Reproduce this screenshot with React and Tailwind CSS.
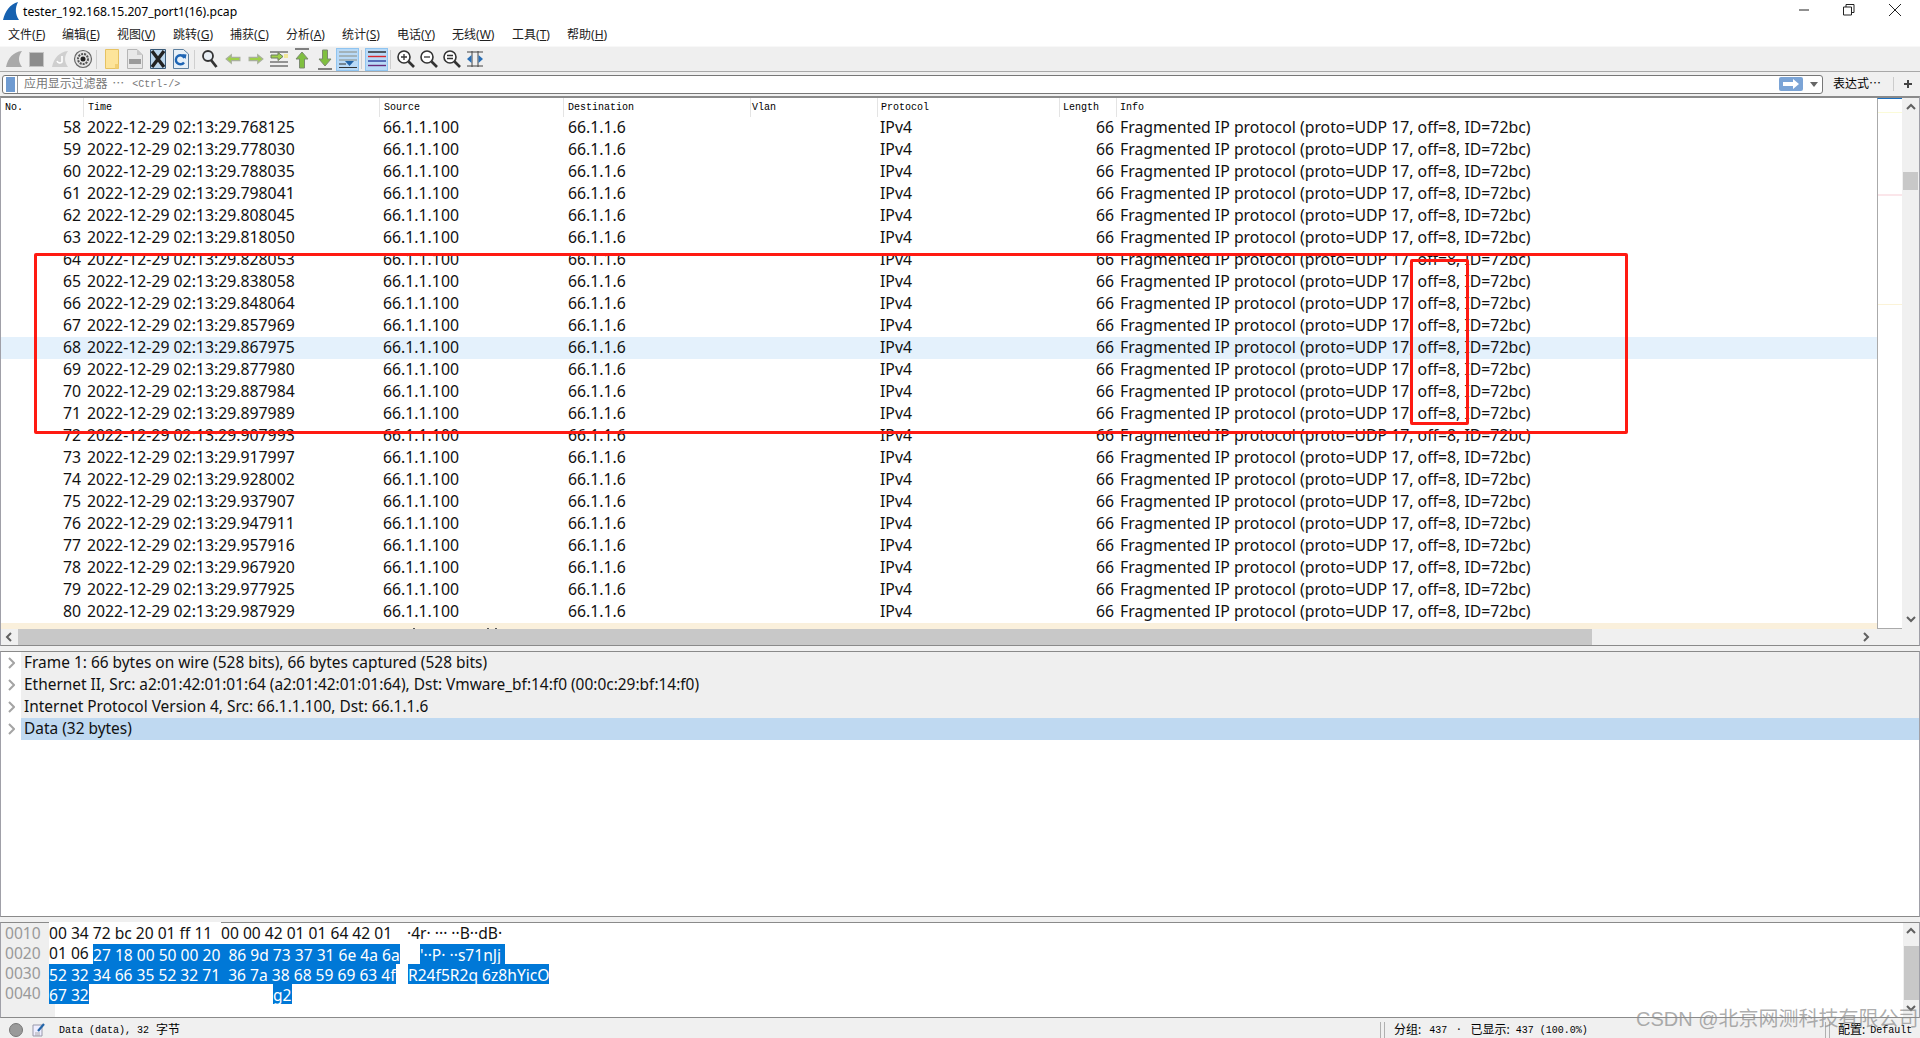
const startNo = 58;
const times = [
  "768125", "778030", "788035", "798041", "808045", "818050", "828053", "838058",
  "848064", "857969", "867975", "877980", "887984", "897989", "907993", "917997",
  "928002", "937907", "947911", "957916", "967920", "977925", "987929",
];
const menus = [
  ["文件", "F", "w-[54px]"],
  ["编辑", "E", "w-[55px]"],
  ["视图", "V", "w-[56px]"],
  ["跳转", "G", "w-[57px]"],
  ["捕获", "C", "w-[56px]"],
  ["分析", "A", "w-[56px]"],
  ["统计", "S", "w-[55px]"],
  ["电话", "Y", "w-[55px]"],
  ["无线", "W", "w-[60px]"],
  ["工具", "T", "w-[55px]"],
  ["帮助", "H", "w-[60px]"],
];
const tree = [
  "Frame 1: 66 bytes on wire (528 bits), 66 bytes captured (528 bits)",
  "Ethernet II, Src: a2:01:42:01:01:64 (a2:01:42:01:01:64), Dst: Vmware_bf:14:f0 (00:0c:29:bf:14:f0)",
  "Internet Protocol Version 4, Src: 66.1.1.100, Dst: 66.1.1.6",
];
const mono = "font-['Liberation_Mono',monospace] text-[10px]";
const colHead = `${mono} text-black`;
const rowText = "font-['Noto_Sans',sans-serif] text-[15.8px] text-[#111]";
const treeText = "font-['Noto_Sans',sans-serif] text-[15.45px] text-[#111]";
const hexText = "font-['Noto_Sans',sans-serif] text-[15.6px] text-[#111]";

function Chevron({ dir = "up", className = "" }) {
  const d = { up: "M1 6 L5 2 L9 6", down: "M1 2 L5 6 L9 2", left: "M6 1 L2 5 L6 9", right: "M2 1 L6 5 L2 9" }[dir];
  return (
    <svg width="10" height="10" viewBox="0 0 10 10" className={className}>
      <path d={d} fill="none" stroke="#606060" strokeWidth="2" />
    </svg>
  );
}

function TreeGutter() {
  return (
    <div className="w-[20px] h-full shrink-0 flex items-center pl-[7px] bg-white">
      <svg width="7" height="12" viewBox="0 0 7 12">
        <path d="M1 1 L6 6 L1 11" fill="none" stroke="#a4a4a4" strokeWidth="2" />
      </svg>
    </div>
  );
}

function Mag({ children }) {
  return (
    <svg width="20" height="20" viewBox="0 0 20 20">
      <circle cx="8" cy="8" r="6" fill="#fff" stroke="#333" strokeWidth="1.6" />
      <path d="M12.5 12.5 L18 18" stroke="#333" strokeWidth="2.6" />
      {children}
    </svg>
  );
}

function Arrow({ flip }) {
  return (
    <svg width="18" height="12" viewBox="0 0 20 14">
      <path
        d={flip ? "M2 7 L8 2 V5 H18 V9 H8 V12 Z" : "M18 7 L12 2 V5 H2 V9 H12 V12 Z"}
        fill="#9fd04a"
        stroke="#a8b09c"
        strokeWidth="1.4"
      />
    </svg>
  );
}

function ToolIcon({ name }) {
  switch (name) {
    case "shark":
      return (
        <svg width="20" height="20" viewBox="0 0 20 20">
          <path d="M2 18 C4 9 9 3 18 2 C14 7 14 13 18 18 Z" fill="#a9a9a9" />
        </svg>
      );
    case "stop":
      return <div className="w-[15px] h-[15px] bg-[#8c8c8c] border border-[#c4c4c4]" />;
    case "restart":
      return (
        <svg width="20" height="20" viewBox="0 0 20 20">
          <path d="M2 18 C4 9 9 3 18 2 C14 7 14 13 18 18 Z" fill="#cfcfcf" />
          <path d="M12 7 V13 A3 3 0 0 1 7 12" fill="none" stroke="#fff" strokeWidth="1.6" />
        </svg>
      );
    case "gear":
      return (
        <svg width="20" height="20" viewBox="0 0 20 20">
          <circle cx="10" cy="10" r="8.5" fill="#e4e4e4" stroke="#666" strokeWidth="1.2" />
          <circle cx="10" cy="10" r="5" fill="none" stroke="#555" strokeWidth="2" strokeDasharray="2 1" />
          <circle cx="10" cy="10" r="2.5" fill="#222" />
        </svg>
      );
    case "file":
      return (
        <svg width="14" height="20" viewBox="0 0 14 20">
          <path d="M.5 .5 H13.5 V19.5 H.5 Z" fill="#fde49a" stroke="#e6c262" />
          <path d="M10 15 H13.5 V19.5 H10 Z" fill="#f2cf73" />
        </svg>
      );
    case "binary":
      return (
        <svg width="16" height="20" viewBox="0 0 16 20">
          <path d="M.5 .5 H10 L15.5 6 V19.5 H.5 Z" fill="#e8e8e8" stroke="#b5b5b5" />
          <path d="M10 .5 V6 H15.5 Z" fill="#c9c9c9" />
          <rect x="2" y="10" width="12" height="5" fill="#9b9b9b" />
        </svg>
      );
    case "close":
      return (
        <svg width="16" height="20" viewBox="0 0 16 20">
          <path d="M.5 .5 H15.5 V19.5 H.5 Z" fill="#bcd6ec" stroke="#3a5a78" />
          <path d="M2 2 L14 18 M14 2 L2 18" stroke="#222" strokeWidth="3.4" />
        </svg>
      );
    case "reload":
      return (
        <svg width="16" height="20" viewBox="0 0 16 20">
          <path d="M.5 .5 H10.5 L15.5 5 V19.5 H.5 Z" fill="#e6f0f8" stroke="#5c7f9f" />
          <path d="M11.5 9 A4.5 4.5 0 1 0 11 13.5" fill="none" stroke="#1d65b5" strokeWidth="2.4" />
          <path d="M9 5 L13.5 5.5 L12.5 10 Z" fill="#1d65b5" />
        </svg>
      );
    case "find":
      return (
        <svg width="18" height="20" viewBox="0 0 18 20">
          <circle cx="7" cy="7" r="5" fill="#e8eef4" stroke="#333" strokeWidth="1.8" />
          <path d="M10 11 L15.5 18" stroke="#333" strokeWidth="2.8" />
        </svg>
      );
    case "left":
      return <Arrow flip />;
    case "right":
      return <Arrow />;
    case "jump":
      return (
        <svg width="20" height="20" viewBox="0 0 20 20">
          <path d="M1 3 H19 M1 17 H19" stroke="#333" strokeWidth="1.2" />
          <path d="M1 13 H19" stroke="#555" strokeWidth="1.2" />
          <path d="M14 7.5 L9 3.5 V6 H2 V9 H9 V11.5 Z" fill="#9fd04a" stroke="#6c7a5e" />
          <rect x="15" y="5" width="4" height="4" fill="#f1e79b" />
        </svg>
      );
    case "top":
      return (
        <svg width="16" height="22" viewBox="0 0 16 22">
          <path d="M1 1 H15" stroke="#333" strokeWidth="1.2" />
          <path d="M8 4 L14 11 H10.5 V20 H5.5 V11 H2 Z" fill="#7fbf3f" stroke="#7c8a70" />
        </svg>
      );
    case "bottom":
      return (
        <svg width="16" height="22" viewBox="0 0 16 22">
          <path d="M1 21 H15" stroke="#333" strokeWidth="1.2" />
          <path d="M8 18 L14 11 H10.5 V2 H5.5 V11 H2 Z" fill="#7fbf3f" stroke="#7c8a70" />
        </svg>
      );
    case "scroll":
      return (
        <svg width="18" height="18" viewBox="0 0 18 18">
          <path d="M0 2 H18 M0 6 H18 M0 10 H18" stroke="#8c8c80" strokeWidth="1.2" />
          <path d="M0 14 H7 M0 17.5 H18" stroke="#333" strokeWidth="1" />
          <path d="M6 11 H15 L10.5 16 Z" fill="#2465a8" />
        </svg>
      );
    case "color":
      return (
        <svg width="18" height="16" viewBox="0 0 18 16">
          <path d="M0 1 H18" stroke="#222" strokeWidth="1.4" />
          <path d="M0 5.5 H18" stroke="#d8262c" strokeWidth="1.4" />
          <path d="M0 10 H18" stroke="#2c3f9c" strokeWidth="1.4" />
          <path d="M0 14.5 H18" stroke="#6a2a7a" strokeWidth="1.4" />
        </svg>
      );
    case "zoomin":
      return (
        <Mag>
          <path d="M5 8 H11 M8 5 V11" stroke="#333" strokeWidth="1.3" />
        </Mag>
      );
    case "zoomout":
      return (
        <Mag>
          <path d="M5 8 H11" stroke="#333" strokeWidth="1.3" />
        </Mag>
      );
    case "zoomreset":
      return (
        <Mag>
          <path d="M5 6.5 H11 M5 9.5 H11" stroke="#333" strokeWidth="1.3" />
        </Mag>
      );
    case "resize":
      return (
        <svg width="16" height="16" viewBox="0 0 16 16">
          <path d="M0 1 H16 M0 15 H16 M5 0 V16 M11 0 V16" stroke="#444" strokeWidth="1" />
          <path d="M0 8 L4.5 4 V12 Z M16 8 L11.5 4 V12 Z" fill="#2a6fb5" />
        </svg>
      );
    default:
      return null;
  }
}

function Tool({ name, on }) {
  return (
    <div
      className={`w-[23px] h-[23px] flex items-center justify-center shrink-0 ${
        on ? "bg-[#b9daf7] border border-[#8fc4f0]" : ""
      }`}
    >
      <ToolIcon name={name} />
    </div>
  );
}

function Sep() {
  return <div className="w-px h-[19px] ml-[2px] mr-[3px] bg-[#cfcfcf] shrink-0" />;
}

function Row({ no, time, bg = "" }) {
  return (
    <div className={`flex h-[22px] shrink-0 items-center pb-[1px] whitespace-nowrap ${rowText} ${bg}`}>
      <div className="w-[80px] text-right shrink-0">{no}</div>
      <div className="w-[302px] pl-[6px] shrink-0">2022-12-29 02:13:29.{time}</div>
      <div className="w-[185px] shrink-0">66.1.1.100</div>
      <div className="w-[312px] shrink-0">66.1.1.6</div>
      <div className="w-[186px] shrink-0">IPv4</div>
      <div className="w-[48px] text-right shrink-0">66</div>
      <div className="pl-[6px]">Fragmented IP protocol (proto=UDP 17, off=8, ID=72bc)</div>
    </div>
  );
}

function HexRow({ offset, children }) {
  return (
    <div className={`flex h-[20px] shrink-0 items-center whitespace-pre ${hexText}`}>
      <div className="w-[48px] pl-[4px] shrink-0 text-[#999]">{offset}</div>
      {children}
    </div>
  );
}

function Sel({ className = "", children }) {
  return <div className={`bg-[#0078d7] text-white h-[20px] shrink-0 ${className}`}>{children}</div>;
}

export default function App() {
  return (
    <div className="relative w-full h-screen overflow-hidden flex flex-col bg-[#f0f0f0] font-['Noto_Sans','Noto_Sans_CJK_SC',sans-serif] text-black">
      {/* title bar */}
      <div className="h-[22px] shrink-0 flex items-center bg-white pl-[3px]">
        <svg width="16" height="18" viewBox="0 0 16 18">
          <path d="M0 18 C2 9 7 2 15 0 C12 6 12 12 16 18 Z" fill="#1661b0" />
        </svg>
        <span className="ml-[4px] mt-[2px] text-[12.2px]">tester_192.168.15.207_port1(16).pcap</span>
        <div className="ml-auto mb-[2px] flex items-center">
          <svg width="12" height="12" viewBox="0 0 12 12" className="mr-[33px]">
            <path d="M1 6 H11" stroke="#222" />
          </svg>
          <svg width="12" height="12" viewBox="0 0 12 12" className="mr-[33px]">
            <path d="M.5 3 H8.5 V11 H.5 Z M3 3 V.5 H11 V8.5 H8.5" fill="none" stroke="#222" />
          </svg>
          <svg width="14" height="14" viewBox="0 0 14 14" className="mr-[18px]">
            <path d="M1 1 L13 13 M13 1 L1 13" stroke="#222" />
          </svg>
        </div>
      </div>

      {/* menu bar */}
      <div className="h-[24px] shrink-0 flex items-center pt-[2px] bg-white pl-[8px] text-[12px] text-[#222]">
        {menus.map(([label, key, w]) => (
          <div key={key} className={`shrink-0 ${w}`}>
            {label}(<span className="underline">{key}</span>)
          </div>
        ))}
      </div>

      {/* toolbar */}
      <div className="h-[26px] shrink-0 flex items-center pl-[2px] bg-[#efefef] border-t border-[#f8f8f8] border-b border-b-[#a8a8a8]">
        <Tool name="shark" />
        <Tool name="stop" />
        <Tool name="restart" />
        <Tool name="gear" />
        <Sep />
        <Tool name="file" />
        <Tool name="binary" />
        <Tool name="close" />
        <Tool name="reload" />
        <Sep />
        <Tool name="find" />
        <Tool name="left" />
        <Tool name="right" />
        <Tool name="jump" />
        <Tool name="top" />
        <Tool name="bottom" />
        <Tool name="scroll" on />
        <Sep />
        <Tool name="color" on />
        <Sep />
        <Tool name="zoomin" />
        <Tool name="zoomout" />
        <Tool name="zoomreset" />
        <Tool name="resize" />
      </div>

      {/* display filter */}
      <div className="h-[24px] shrink-0 flex items-center pl-[2px] bg-[#f0f0f0]">
        <div className="w-[1821px] h-[19px] shrink-0 flex items-center bg-white border border-[#777] rounded-[3px]">
          <div className="w-[15px] h-full shrink-0 border-r border-[#999] flex justify-center items-center">
            <div className="w-[9px] h-[15px] bg-[#6f9bd1]" />
          </div>
          <span className="ml-[6px] text-[12px] tracking-[-0.1px] text-[#777]">应用显示过滤器</span>
          <span className="ml-[5px] text-[12px] text-[#777]">⋯</span>
          <span className={`ml-[8px] text-[#777] ${mono}`}>&lt;Ctrl-/&gt;</span>
          <div className="ml-auto w-[24px] h-[14px] bg-[#7ba4d6] rounded-[2px] flex items-center justify-center">
            <svg width="18" height="10" viewBox="0 0 18 10">
              <path d="M1 3 H11 V0 L17 5 L11 10 V7 H1 Z" fill="#fff" />
            </svg>
          </div>
          <svg width="8" height="5" viewBox="0 0 8 5" className="ml-[7px] mr-[4px]">
            <path d="M0 0 H8 L4 5 Z" fill="#666" />
          </svg>
        </div>
        <span className="ml-[10px] text-[12px] w-[60px]">表达式⋯</span>
        <div className="w-px h-[14px] bg-[#ccc]" />
        <svg width="10" height="10" viewBox="0 0 10 10" className="ml-[9px]">
          <path d="M5 1 V9 M1 5 H9" stroke="#444" strokeWidth="2" />
        </svg>
      </div>

      {/* packet list */}
      <div className="h-[550px] shrink-0 flex flex-col border-t-2 border-[#8a8a8a] border-l border-l-[#a0a0a8] border-r border-r-[#a0a0a8] border-b border-b-[#8a8a8a] overflow-hidden">
        <div className="flex-1 min-h-0 flex">
          <div className="flex-1 min-w-0 flex flex-col bg-white overflow-hidden">
            <div className={`h-[19px] shrink-0 flex items-center ${colHead}`}>
              <div className="w-[83px] h-full pl-[4px] flex items-center border-r border-[#e4e4e4] shrink-0">No.</div>
              <div className="w-[296px] h-full pl-[4px] flex items-center border-r border-[#e4e4e4] shrink-0">Time</div>
              <div className="w-[184px] h-full pl-[4px] flex items-center border-r border-[#e4e4e4] shrink-0">Source</div>
              <div className="w-[187px] h-full pl-[4px] flex items-center border-r border-[#e4e4e4] shrink-0">Destination</div>
              <div className="w-[127px] h-full pl-[1px] flex items-center border-r border-[#e4e4e4] shrink-0">Vlan</div>
              <div className="w-[182px] h-full pl-[3px] flex items-center border-r border-[#e4e4e4] shrink-0">Protocol</div>
              <div className="w-[57px] h-full pl-[3px] flex items-center border-r border-[#e4e4e4] shrink-0">Length</div>
              <div className="pl-[3px]">Info</div>
            </div>
            {times.map((t, i) => (
              <Row key={t} no={startNo + i} time={t} bg={startNo + i === 68 ? "bg-[#e4f1fc]" : ""} />
            ))}
            {/* top edge of the next packet row, scrolled out of view */}
            <div className="relative h-[6px] shrink-0 bg-[#faf0dc]">
              <div className="absolute left-[412px] bottom-0 w-[2px] h-px bg-[#555]" />
              <div className="absolute left-[486px] bottom-0 w-[2px] h-px bg-[#555]" />
              <div className="absolute left-[494px] bottom-0 w-[2px] h-px bg-[#555]" />
            </div>
          </div>
          {/* packet minimap */}
          <div className="w-[25px] shrink-0 relative bg-white border-l border-[#aaa] border-b border-b-[#aaa] border-t border-t-[#1a6fc0]">
            <div className="absolute top-[13px] inset-x-0 h-px bg-[#fbfbd8]" />
            <div className="absolute top-[95px] inset-x-0 h-[2px] bg-[#fbe6ea]" />
            <div className="absolute top-[205px] inset-x-0 h-px bg-[#fbf3d8]" />
          </div>
          <div className="w-[17px] shrink-0 flex flex-col items-center bg-[#f0f0f0]">
            <Chevron className="mt-[5px]" />
            <div className="w-[15px] h-[18px] mt-[59px] bg-[#c8c8c8]" />
            <Chevron dir="down" className="mt-auto mb-[4px]" />
          </div>
        </div>
        <div className="h-[16px] shrink-0 flex items-center bg-[#f0f0f0]">
          <div className="w-[17px] flex justify-center shrink-0">
            <Chevron dir="left" />
          </div>
          <div className="w-[1574px] h-full bg-[#c8c8c8] shrink-0" />
          <Chevron dir="right" className="ml-[270px]" />
        </div>
      </div>

      <div className="h-[5px] shrink-0" />

      {/* packet details */}
      <div className="h-[266px] shrink-0 flex flex-col bg-white border-t border-b border-[#8a8a8a] border-l border-r border-l-[#a0a0a8] border-r-[#a0a0a8]">
        {tree.map((t) => (
          <div key={t} className={`h-[22px] shrink-0 flex items-center whitespace-nowrap ${treeText}`}>
            <TreeGutter />
            <div className="flex-1 h-full pl-[3px] flex items-center bg-[#efefef]">{t}</div>
          </div>
        ))}
        <div className={`h-[22px] shrink-0 flex items-center whitespace-nowrap ${treeText}`}>
          <TreeGutter />
          <div className="flex-1 h-full pl-[3px] flex items-center bg-[#bfd9f1]">Data (32 bytes)</div>
        </div>
      </div>

      <div className="h-[5px] shrink-0" />

      {/* packet bytes */}
      <div className="h-[96px] shrink-0 flex bg-white border-t border-b border-[#8a8a8a] border-l border-r border-l-[#a0a0a8] border-r-[#a0a0a8]">
        <div className="flex-1 min-w-0 flex flex-col pt-[1px] bg-[linear-gradient(to_right,#efefef_54px,#ffffff_54px)]">
          <HexRow offset="0010">
            <div className="w-[172px] shrink-0 bg-white">00 34 72 bc 20 01 ff 11</div>
            <div className="w-[186px] shrink-0">00 00 42 01 01 64 42 01</div>
            <div className="shrink-0">·4r· ··· ··B··dB·</div>
          </HexRow>
          <HexRow offset="0020">
            <div className="w-[44px] shrink-0 bg-white">01 06</div>
            <Sel className="w-[307px]">27 18 00 50 00 20  86 9d 73 37 31 6e 4a 6a</Sel>
            <div className="w-[20px] shrink-0" />
            <Sel className="w-[85px]">'··P· ··s71nJj</Sel>
          </HexRow>
          <HexRow offset="0030">
            <Sel className="w-[347px]">52 32 34 66 35 52 32 71  36 7a 38 68 59 69 63 4f</Sel>
            <div className="w-[12px] shrink-0" />
            <Sel className="w-[141px]">R24f5R2q 6z8hYicO</Sel>
          </HexRow>
          <HexRow offset="0040">
            <Sel className="w-[40px]">67 32</Sel>
            <div className="w-[184px] shrink-0" />
            <Sel className="w-[19px]">g2</Sel>
          </HexRow>
        </div>
        <div className="w-[16px] shrink-0 flex flex-col items-center bg-[#f0f0f0]">
          <Chevron className="mt-[4px]" />
          <div className="w-[15px] h-[54px] mt-[9px] bg-[#c8c8c8]" />
          <Chevron dir="down" className="mt-auto mb-[3px]" />
        </div>
      </div>

      {/* status bar */}
      <div className="flex-1 min-h-0 flex items-center pt-[4px] bg-[#f0f0f0] whitespace-nowrap">
        <div className="ml-[9px] w-[14px] h-[14px] rounded-full bg-[#9a9a9a] border border-[#777] shrink-0" />
        <svg width="14" height="14" viewBox="0 0 14 14" className="ml-[9px] shrink-0">
          <path d="M1 2 H10 V13 H1 Z" fill="#eef" stroke="#99a" />
          <path d="M6 8 L12 1" stroke="#2465a8" strokeWidth="2.2" />
          <path d="M3 10 H8 M3 12 H8" stroke="#aaa" />
        </svg>
        <span className={`ml-[13px] ${mono}`}>Data (data), 32</span>
        <span className="ml-[7px] text-[12px]">字节</span>
        <div className="ml-auto w-[5px] h-full border-x border-[#b0b0b0] shrink-0" />
        <div className="ml-[9px] w-[431px] shrink-0 flex items-center text-[12px]">
          <span>分组:</span>
          <span className={`ml-[8px] ${mono}`}>437</span>
          <span className="ml-[10px]">·</span>
          <span className="ml-[10px]">已显示:</span>
          <span className={`ml-[6px] ${mono}`}>437 (100.0%)</span>
        </div>
        <div className="w-[5px] h-full border-x border-[#b0b0b0] shrink-0" />
        <div className="ml-[8px] w-[82px] shrink-0 flex items-center text-[12px]">
          <span>配置:</span>
          <span className={`ml-[5px] ${mono}`}>Default</span>
        </div>
      </div>

      {/* annotations drawn on the screenshot */}
      <div className="absolute left-[34px] top-[253px] w-[1594px] h-[181px] border-[3px] border-[#ff1a12] rounded-[2px]" />
      <div className="absolute left-[1410px] top-[259px] w-[59px] h-[166px] border-[3px] border-[#ff1a12] rounded-[2px]" />
      <div className="absolute left-[1636px] top-[1005px] text-[20px] leading-[28px] text-[#8a8a8a]/70 whitespace-nowrap font-['Liberation_Sans','Noto_Sans_CJK_SC',sans-serif]">
        CSDN @北京网测科技有限公司
      </div>
    </div>
  );
}
